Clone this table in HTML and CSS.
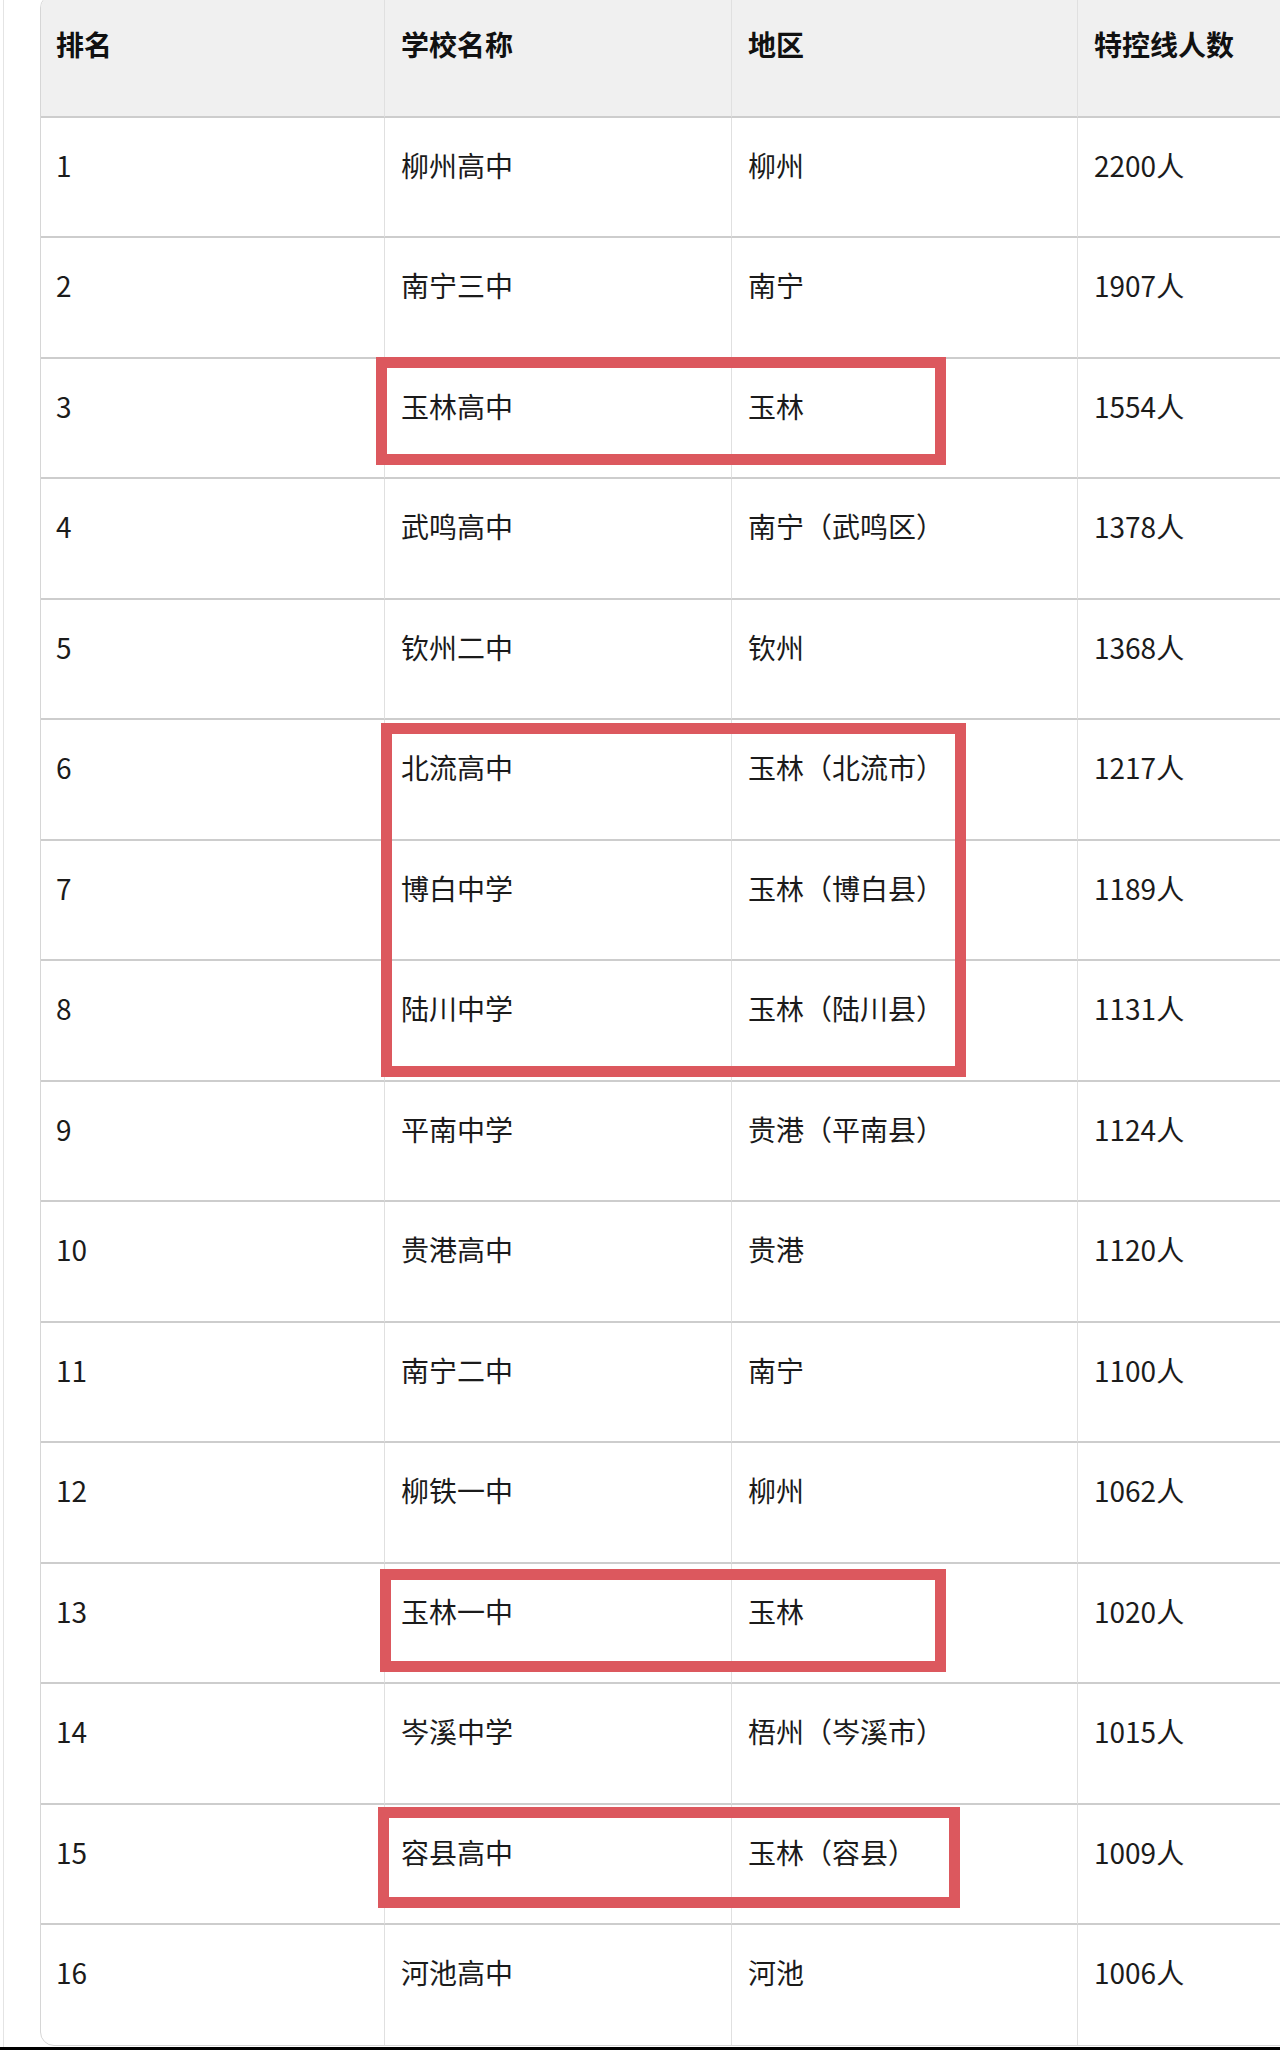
FILE: index.html
```html
<!DOCTYPE html>
<html lang="zh-CN">
<head>
    <meta charset="UTF-8">
    <meta name="viewport" content="width=device-width, initial-scale=1.0">
    <title>广西高中特控线人数排名</title>
    <link rel="stylesheet" href="styles.css">
</head>
<body>

    <div class="page">
        <div class="table-card">
            <table class="rank-table">
                <thead>
                    <tr>
                        <th class="col-rank">排名</th>
                        <th class="col-school">学校名称</th>
                        <th class="col-area">地区</th>
                        <th class="col-count">特控线人数</th>
                    </tr>
                </thead>
                <tbody>
                    <tr><td>1</td><td>柳州高中</td><td>柳州</td><td>2200人</td></tr>
                    <tr><td>2</td><td>南宁三中</td><td>南宁</td><td>1907人</td></tr>
                    <tr><td>3</td><td>玉林高中</td><td>玉林</td><td>1554人</td></tr>
                    <tr><td>4</td><td>武鸣高中</td><td>南宁（武鸣区）</td><td>1378人</td></tr>
                    <tr><td>5</td><td>钦州二中</td><td>钦州</td><td>1368人</td></tr>
                    <tr><td>6</td><td>北流高中</td><td>玉林（北流市）</td><td>1217人</td></tr>
                    <tr><td>7</td><td>博白中学</td><td>玉林（博白县）</td><td>1189人</td></tr>
                    <tr><td>8</td><td>陆川中学</td><td>玉林（陆川县）</td><td>1131人</td></tr>
                    <tr><td>9</td><td>平南中学</td><td>贵港（平南县）</td><td>1124人</td></tr>
                    <tr><td>10</td><td>贵港高中</td><td>贵港</td><td>1120人</td></tr>
                    <tr><td>11</td><td>南宁二中</td><td>南宁</td><td>1100人</td></tr>
                    <tr><td>12</td><td>柳铁一中</td><td>柳州</td><td>1062人</td></tr>
                    <tr><td>13</td><td>玉林一中</td><td>玉林</td><td>1020人</td></tr>
                    <tr><td>14</td><td>岑溪中学</td><td>梧州（岑溪市）</td><td>1015人</td></tr>
                    <tr><td>15</td><td>容县高中</td><td>玉林（容县）</td><td>1009人</td></tr>
                    <tr><td>16</td><td>河池高中</td><td>河池</td><td>1006人</td></tr>
                </tbody>
            </table>
        </div>
    </div>

    <!-- red marks drawn over the Yulin rows -->
    <div class="mark mark-yulin"></div>
    <div class="mark mark-group"></div>
    <div class="mark mark-yulin-1"></div>
    <div class="mark mark-rongxian"></div>

    <div class="bottom-bar"></div>

</body>
</html>
```

FILE: styles.css
```css
body {
    margin: 0;
    position: relative;
    overflow: hidden;
    background-color: #fff;
    font-family: "Noto Sans CJK SC", "Noto Sans", sans-serif;
    color: #1b1b1b;
}

.page {
    margin-left: 3px;
    border-left: 1px solid #e4e4e4;
    padding-left: 36px;
    padding-bottom: 1px;
    overflow: hidden;
}

.table-card {
    margin-top: -6px;
    width: 1382px;
    border: 1px solid #d6d6d6;
    border-radius: 14px;
    overflow: hidden;
    background: #fff;
}

.rank-table {
    width: 1382px;
    table-layout: fixed;
    border-collapse: separate;
    border-spacing: 0;
    font-size: 28px;
    line-height: 40px;
}

.rank-table th,
.rank-table td {
    box-sizing: border-box;
    text-align: left;
    vertical-align: top;
    border-left: 1px solid #e0e0e0;
    border-bottom: 2px solid #cdcdcd;
    white-space: nowrap;
}

.rank-table th:first-child,
.rank-table td:first-child {
    border-left: none;
    padding-left: 15px;
}

.rank-table th {
    background-color: #f0f0f0;
    font-weight: 700;
    color: #111;
    padding: 29px 16px 51.5px;
}

.rank-table td {
    font-weight: 400;
    padding: 27px 16px 51.5px;
}

.rank-table tbody tr:last-child td {
    border-bottom: none;
    padding-bottom: 52.5px;
}

.col-rank { width: 343px; }
.col-school { width: 347px; }
.col-area { width: 346px; }
.col-count { width: 346px; }

.mark {
    position: absolute;
    box-sizing: border-box;
    border: 11px solid #dc585e;
}

.mark-yulin {
    left: 376px;
    top: 357px;
    width: 570px;
    height: 108px;
}

.mark-group {
    left: 381px;
    top: 723px;
    width: 585px;
    height: 354px;
}

.mark-yulin-1 {
    left: 380px;
    top: 1569px;
    width: 566px;
    height: 103px;
}

.mark-rongxian {
    left: 378px;
    top: 1807px;
    width: 582px;
    height: 101px;
}

.bottom-bar {
    height: 6px;
    background-color: #000;
}
```
